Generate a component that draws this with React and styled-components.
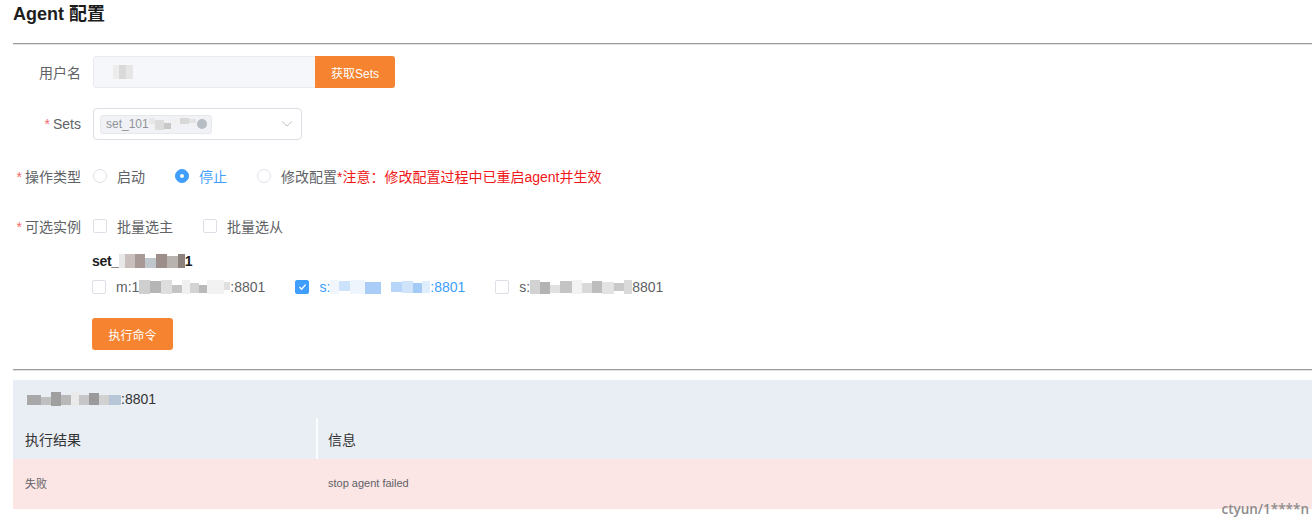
import React from "react";
import styled, { createGlobalStyle } from "styled-components";

const Global = createGlobalStyle`
  html, body { margin: 0; padding: 0; background: #fff; }
  body {
    font-family: "Liberation Sans", Arial, "Noto Sans CJK SC", sans-serif;
    width: 1312px; height: 518px; overflow: hidden;
  }
  * { box-sizing: border-box; }
`;

const Page = styled.div`
  position: relative;
  width: 1312px;
  height: 518px;
  padding-left: 13px;
`;

const Header = styled.div`
  height: 43px;
`;

const Title = styled.h1`
  margin: 0;
  font-size: 18px;
  line-height: 28px;
  font-weight: 700;
  color: #1d1d1d;
`;

const Divider = styled.div`
  height: 2px;
  border-top: 1px solid #9c9c9c;
  border-bottom: 1px solid #e2e2e2;
  margin: ${(p) => p.$margin || "0"};
`;

const Form = styled.div`
  padding-top: 11px;
`;

const Row = styled.div`
  display: flex;
  align-items: center;
  min-height: 32px;
  margin-bottom: ${(p) => p.$mb ?? 20}px;
`;

const Label = styled.label`
  width: 80px;
  flex: none;
  padding-right: 12px;
  text-align: right;
  font-size: 14px;
  color: #606266;
  white-space: nowrap;
`;

const Req = styled.span`
  color: #f56c6c;
  margin-right: 3px;
`;

const InputBox = styled.div`
  width: 222px;
  height: 32px;
  background: #f5f7fa;
  border: 1px solid #e8eaee;
  border-right: none;
  border-radius: 4px 0 0 4px;
  display: flex;
  align-items: center;
  padding-left: 19px;
`;

const OrangeButton = styled.button`
  height: ${(p) => p.$h || 32}px;
  width: ${(p) => p.$w || 80}px;
  border: none;
  border-radius: ${(p) => p.$radius || "3px"};
  background: #f5832f;
  color: #fff;
  font-size: 12px;
  font-family: inherit;
  padding: 0;
  cursor: pointer;
`;

const SelectBox = styled.div`
  width: 209px;
  height: 32px;
  border: 1px solid #dcdfe6;
  border-radius: 4px;
  display: flex;
  align-items: center;
  justify-content: space-between;
  padding: 0 8px 0 6px;
`;

const Tag = styled.span`
  display: inline-flex;
  align-items: center;
  height: 19px;
  padding: 0 4px 0 5px;
  background: #f0f2f5;
  border: 1px solid #e6e8ec;
  border-radius: 3px;
  font-size: 12px;
  color: #909399;
`;

const TagClose = styled.span`
  display: inline-block;
  width: 10px;
  height: 10px;
  border-radius: 50%;
  background: #b8bcc4;
  margin-left: 1px;
`;

const Choices = styled.div`
  display: flex;
  align-items: center;
`;

const Choice = styled.label`
  display: inline-flex;
  align-items: center;
  margin-right: 30px;
  font-size: 14px;
  color: ${(p) => (p.$active ? "#409eff" : "#606266")};
  white-space: nowrap;
`;

const RadioDot = styled.span`
  width: 14px;
  height: 14px;
  border-radius: 50%;
  margin-right: 10px;
  flex: none;
  border: 1px solid ${(p) => (p.$on ? "#409eff" : "#dcdfe6")};
  background: ${(p) => (p.$on ? "#409eff" : "#fff")};
  display: inline-flex;
  align-items: center;
  justify-content: center;
  &::after {
    content: "";
    width: 4px;
    height: 4px;
    border-radius: 50%;
    background: #fff;
    display: ${(p) => (p.$on ? "block" : "none")};
  }
`;

const Box = styled.span`
  width: 14px;
  height: 14px;
  border-radius: 2px;
  margin-right: 10px;
  flex: none;
  border: 1px solid ${(p) => (p.$on ? "#409eff" : "#dcdfe6")};
  background: ${(p) => (p.$on ? "#409eff" : "#fff")};
  display: inline-flex;
  align-items: center;
  justify-content: center;
`;

const Warn = styled.span`
  color: #f01818;
  font-size: 14px;
  margin-left: -30px;
  white-space: nowrap;
`;

const Group = styled.div`
  margin-left: 79px;
`;

const GroupTitle = styled.div`
  margin-top: 9px;
  font-size: 14px;
  line-height: 20px;
  font-weight: 700;
  color: #1d1d1d;
  display: flex;
  align-items: center;
  letter-spacing: -0.3px;
`;

const Instances = styled.div`
  margin-top: 6px;
  display: flex;
  align-items: center;
  height: 20px;
`;

const ExecRow = styled.div`
  margin-top: 21px;
`;

const Mosaic = styled.span`
  display: inline-flex;
  align-items: center;
  height: 14px;
`;

const Cell = styled.span`
  display: inline-block;
  width: ${(p) => p.$w || 7}px;
  height: ${(p) => p.$h || 12}px;
  background: ${(p) => p.$c};
  margin-top: ${(p) => p.$dy || 0}px;
`;

const Panel = styled.div`
  width: 1299px;
  background: #e9edf4;
`;

const PanelHead = styled.div`
  height: 38px;
  display: flex;
  align-items: center;
  padding-left: 14px;
  font-size: 14px;
  color: #333;
`;

const Table = styled.div`
  display: grid;
  grid-template-columns: 303px 1fr;
`;

const HeadCell = styled.div`
  height: 41px;
  display: flex;
  align-items: center;
  padding-left: ${(p) => (p.$sep ? 10 : 12)}px;
  font-size: 14px;
  color: #333;
  border-left: ${(p) => (p.$sep ? "2px solid #fbfcfd" : "none")};
`;

const BodyCell = styled.div`
  height: 50px;
  display: flex;
  align-items: center;
  padding-left: 12px;
  padding-bottom: 2px;
  font-size: 11px;
  color: #606266;
  background: #fce5e5;
`;

const Watermark = styled.div`
  position: absolute;
  right: 3px;
  bottom: 0;
  font-family: "Open Sans", "DejaVu Sans", sans-serif;
  font-size: 13.5px;
  font-weight: 600;
  color: #8c8c8c;
  line-height: 18px;
`;

const blocks = (list) => (
  <Mosaic>
    {list.map(([c, w, h, dy], i) => (
      <Cell key={i} $c={c} $w={w} $h={h} $dy={dy} />
    ))}
  </Mosaic>
);

const Check = () => (
  <svg width="9" height="8" viewBox="0 0 9 8">
    <polyline points="1.5,4 3.6,6.2 7.6,1.6" fill="none" stroke="#fff" strokeWidth="1.4" />
  </svg>
);

const Chevron = () => (
  <svg width="12" height="8" viewBox="0 0 12 8">
    <polyline points="1,1.5 6,6 11,1.5" fill="none" stroke="#c0c4cc" strokeWidth="1" />
  </svg>
);

export default function App() {
  return (
    <>
      <Global />
      <Page>
        <Header>
          <Title>Agent 配置</Title>
        </Header>
        <Divider />
        <Form>
          <Row>
            <Label>用户名</Label>
            <InputBox>
              {blocks([["#ececec", 6, 14], ["#d9d9d9", 7, 14], ["#e6e6e6", 7, 14]])}
            </InputBox>
            <OrangeButton $radius="0 3px 3px 0">获取Sets</OrangeButton>
          </Row>
          <Row>
            <Label>
              <Req>*</Req>Sets
            </Label>
            <SelectBox>
              <Tag>
                set_101
                {blocks([
                  ["#e8e8e8", 6, 6, -6],
                  ["#dcdcdc", 9, 10, 2],
                  ["#c8c8c8", 7, 6, 4],
                  ["#f0f0f0", 9, 6, -4],
                  ["#d8d8d8", 9, 6, -6],
                  ["#e4e4e4", 7, 4, -6],
                ])}
                <TagClose />
              </Tag>
              <Chevron />
            </SelectBox>
          </Row>
          <Row $mb={18}>
            <Label>
              <Req>*</Req>操作类型
            </Label>
            <Choices>
              <Choice>
                <RadioDot />
                启动
              </Choice>
              <Choice $active>
                <RadioDot $on />
                停止
              </Choice>
              <Choice>
                <RadioDot />
                修改配置
              </Choice>
              <Warn>*注意：修改配置过程中已重启agent并生效</Warn>
            </Choices>
          </Row>
          <Row $mb={0}>
            <Label>
              <Req>*</Req>可选实例
            </Label>
            <Choices>
              <Choice>
                <Box />
                批量选主
              </Choice>
              <Choice>
                <Box />
                批量选从
              </Choice>
            </Choices>
          </Row>
          <Group>
            <GroupTitle>
              set_
              {blocks([
                ["#e8e8e8", 6, 14],
                ["#c9c0bd", 10, 14],
                ["#a79a96", 10, 14],
                ["#bfc7cc", 11, 10, 4],
                ["#9c8e8a", 11, 14],
                ["#b9b3b0", 11, 12, 2],
                ["#8d817d", 7, 14],
              ])}
              1
            </GroupTitle>
            <Instances>
              <Choice>
                <Box />
                m:1
                {blocks([
                  ["#cfcfcf", 11, 14],
                  ["#b5b5b5", 11, 12],
                  ["#dedede", 11, 14],
                  ["#c4c4c4", 10, 8, 4],
                  ["#f0f0f0", 8, 14],
                  ["#d3d3d3", 9, 10, 2],
                  ["#b9b9b9", 8, 8, 4],
                  ["#f2f2f2", 17, 14],
                  ["#e0e0e0", 6, 8, -2],
                ])}
                :8801
              </Choice>
              <Choice $active>
                <Box $on>
                  <Check />
                </Box>
                s:
                {blocks([
                  ["#f1f6fd", 9, 14],
                  ["#cde2fb", 11, 10, -2],
                  ["#eef5fd", 15, 14],
                  ["#a9cdf7", 16, 12, 1],
                  ["#ffffff", 10, 14],
                  ["#b6d5f8", 11, 10],
                  ["#cfe3fa", 11, 12],
                  ["#a3cbf6", 9, 10, 2],
                  ["#dfeefc", 8, 12],
                ])}
                :8801
              </Choice>
              <Choice>
                <Box />
                s:
                {blocks([
                  ["#d2d2d2", 10, 14],
                  ["#b3b3b3", 10, 12, 2],
                  ["#e1e1e1", 10, 8, 4],
                  ["#c4c4c4", 12, 12],
                  ["#f3f3f3", 10, 14],
                  ["#d9d9d9", 10, 10, 2],
                  ["#bdbdbd", 10, 12],
                  ["#e3e3e3", 12, 12, 2],
                  ["#c9c9c9", 10, 8],
                  ["#dadada", 8, 14],
                ])}
                8801
              </Choice>
            </Instances>
            <ExecRow>
              <OrangeButton $w={81} $h={32}>执行命令</OrangeButton>
            </ExecRow>
          </Group>
        </Form>
        <Divider $margin="19px 0 9px" />
        <Panel>
          <PanelHead>
            {blocks([
              ["#a8a8a8", 14, 10, 2],
              ["#c0c0c0", 10, 8, 4],
              ["#9f9f9f", 10, 14],
              ["#b8b8b8", 10, 10, 2],
              ["#eaeaea", 8, 14],
              ["#c6c6c6", 10, 10, 2],
              ["#9a9a9a", 10, 12],
              ["#d1d1d1", 10, 10, 2],
              ["#b7c6d6", 12, 10, 2],
            ])}
            :8801
          </PanelHead>
          <Table>
            <HeadCell>执行结果</HeadCell>
            <HeadCell $sep>信息</HeadCell>
            <BodyCell>失败</BodyCell>
            <BodyCell>stop agent failed</BodyCell>
          </Table>
        </Panel>
        <Watermark>ctyun/1****n</Watermark>
      </Page>
    </>
  );
}
